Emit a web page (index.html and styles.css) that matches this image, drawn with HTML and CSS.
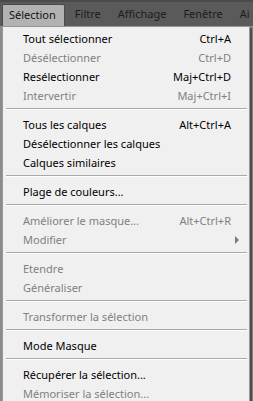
FILE: index.html
```html
<!DOCTYPE html>
<html lang="fr">
<head>
    <meta charset="UTF-8">
    <title>Sélection</title>
    <link rel="stylesheet" href="styles.css">
</head>
<body>
    <div class="menubar">
        <div class="menubar-item active">Sélection</div>
        <div class="menubar-item">Filtre</div>
        <div class="menubar-item">Affichage</div>
        <div class="menubar-item">Fenêtre</div>
        <div class="menubar-item">Ai</div>
    </div>
    <div class="menu">
        <div class="menu-item"><span>Tout sélectionner</span><span class="shortcut">Ctrl+A</span></div>
        <div class="menu-item disabled"><span>Désélectionner</span><span class="shortcut">Ctrl+D</span></div>
        <div class="menu-item"><span>Resélectionner</span><span class="shortcut">Maj+Ctrl+D</span></div>
        <div class="menu-item disabled"><span>Intervertir</span><span class="shortcut">Maj+Ctrl+I</span></div>
        <div class="separator"></div>
        <div class="menu-item"><span>Tous les calques</span><span class="shortcut">Alt+Ctrl+A</span></div>
        <div class="menu-item"><span>Désélectionner les calques</span></div>
        <div class="menu-item"><span>Calques similaires</span></div>
        <div class="separator"></div>
        <div class="menu-item"><span>Plage de couleurs...</span></div>
        <div class="separator"></div>
        <div class="menu-item disabled"><span>Améliorer le masque...</span><span class="shortcut">Alt+Ctrl+R</span></div>
        <div class="menu-item disabled"><span>Modifier</span><span class="arrow"></span></div>
        <div class="separator"></div>
        <div class="menu-item disabled"><span>Etendre</span></div>
        <div class="menu-item disabled"><span>Généraliser</span></div>
        <div class="separator"></div>
        <div class="menu-item disabled"><span>Transformer la sélection</span></div>
        <div class="separator"></div>
        <div class="menu-item"><span>Mode Masque</span></div>
        <div class="separator"></div>
        <div class="menu-item"><span>Récupérer la sélection...</span></div>
        <div class="menu-item disabled"><span>Mémoriser la sélection...</span></div>
    </div>
</body>
</html>
```

FILE: styles.css
```css
body {
    margin: 0;
    width: 253px;
    height: 401px;
    overflow: hidden;
    background: #8c8c8c;
    font-family: "Noto Sans", "Liberation Sans", sans-serif;
    font-size: 11px;
}
.menubar {
    display: flex;
    height: 26px;
    background: #5a5a5a;
    border-top: 2px solid #4b4b4b;
    box-sizing: border-box;
    white-space: nowrap;
}
.menubar-item {
    padding: 0 7px 0 10px;
    line-height: 24px;
    color: #1c1c1c;
}
.menubar-item.active {
    margin: 2px 0 0 2px;
    padding: 0 8px 0 6px;
    line-height: 20px;
    background: #b2b2b2;
    border: 1px solid #4a4a4a;
    border-bottom: none;
    border-radius: 2px 2px 0 0;
    color: #101010;
}
.menu {
    margin-left: 2px;
    width: 248px;
    box-sizing: border-box;
    background: #f0f0f0;
    border: 1px solid #979797;
    padding: 2px 0;
    box-shadow: 2px 2px 1px rgba(0, 0, 0, 0.45);
}
.menu-item {
    display: flex;
    justify-content: space-between;
    align-items: center;
    height: 19px;
    padding: 0 18px 0 20px;
    color: #000;
}
.menu-item.disabled {
    color: #808080;
}
.shortcut {
    text-align: right;
}
.arrow {
    width: 0;
    height: 0;
    margin-right: -8px;
    border-top: 4px solid transparent;
    border-bottom: 4px solid transparent;
    border-left: 4px solid #7a7a7a;
}
.separator {
    margin: 3px 2px 5px 3px;
    border-top: 1px solid #a8a8a8;
    border-bottom: 1px solid #ffffff;
    height: 0;
}
```
